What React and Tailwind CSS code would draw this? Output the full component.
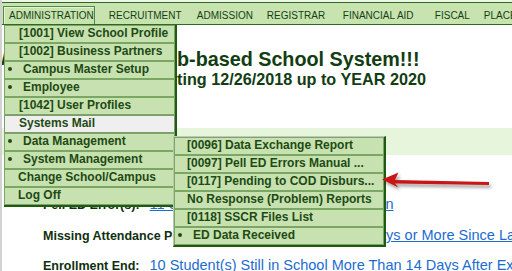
import React from 'react'

// --- Menu data -----------------------------------------------------------
const NAV = [
  { label: 'RECRUITMENT', w: 'w-[93px]', pl: 'pl-[14px]' },
  { label: 'ADMISSION', w: 'w-[68px]', pl: 'pl-[9px]' },
  { label: 'REGISTRAR', w: 'w-[75px]', pl: 'pl-[11px]' },
  { label: 'FINANCIAL AID', w: 'w-[97px]', pl: 'pl-[12px]' },
  { label: 'FISCAL', w: 'w-[49px]', pl: 'pl-[7px]' },
  { label: 'PLACEMENT', w: 'w-[60px]', pl: 'pl-[7px]' },
]

const MAIN_MENU = [
  { label: '[1001] View School Profile' },
  { label: '[1002] Business Partners' },
  { label: 'Campus Master Setup', bullet: true },
  { label: 'Employee', bullet: true },
  { label: '[1042] User Profiles' },
  { label: 'Systems Mail', active: true },
  { label: 'Data Management', bullet: true },
  { label: 'System Management', bullet: true },
  { label: 'Change School/Campus' },
  { label: 'Log Off' },
]

const SUB_MENU = [
  { label: '[0096] Data Exchange Report' },
  { label: '[0097] Pell ED Errors Manual ...' },
  { label: '[0117] Pending to COD Disburs...' },
  { label: 'No Response (Problem) Reports' },
  { label: '[0118] SSCR Files List' },
  { label: 'ED Data Received', bullet: true },
]

function MenuItem({ item, pad }) {
  const tone = item.active
    ? 'bg-[#efefef] border-[#7f9a72]'
    : 'bg-[#c7e2b0] border-[#7aa862]'
  return (
    <div className={`h-[18px] border ${tone} flex items-start leading-[14px] whitespace-nowrap overflow-hidden`}>
      {item.bullet ? (
        <>
          <span className="mt-[5px] ml-[3px] w-[4px] h-[4px] shrink-0 rounded-full bg-[#1e4a14]" />
          <span className="ml-[11px]">{item.label}</span>
        </>
      ) : (
        <span className={pad}>{item.label}</span>
      )}
    </div>
  )
}

function Row({ h, label, link }) {
  return (
    <div className={`${h} pl-[41px] flex items-baseline gap-[10px] whitespace-nowrap leading-[30px]`}>
      <span className="text-[12.5px] font-bold text-[#0f2f0f]">{label}</span>
      <a className="text-[14.5px] text-[#1c6cd0] underline">{link}</a>
    </div>
  )
}

// heading line whose first part sits under the dropdown menu
function Heading({ className, hidden, shown }) {
  return (
    <div className={`pl-[175px] whitespace-nowrap font-bold text-[#123d12] ${className}`}>
      <span className="relative">
        <span className="absolute right-full top-0">{hidden}</span>
        {shown}
      </span>
    </div>
  )
}

export default function App() {
  return (
    <div className="relative w-[512px] h-[271px] overflow-hidden bg-white border-l-2 border-[#d2d2d2] font-['Liberation_Sans',Arial,sans-serif]">
      <div className="h-[2px] bg-[#eef6e8]" />

      {/* top navigation */}
      <nav className="h-[23px] border-y border-[#2d6a1f] bg-[#c7e3b0] flex items-end pl-px text-[10px] leading-[10px] text-[#163f10] whitespace-nowrap">
        <div className="h-[18px] w-[97px] border-x border-t border-[#55874a] pt-[4px] pl-[5px] shadow-[inset_1px_1px_0_#e4f2da]">
          ADMINISTRATION
        </div>
        {NAV.map((n, i) => (
          <React.Fragment key={n.label}>
            {i > 0 && <span className="w-px h-[14px] mb-[1px] bg-[#2f5f22]" />}
            <div className={`h-[21px] pt-[8px] shrink-0 ${n.w} ${n.pl}`}>{n.label}</div>
          </React.Fragment>
        ))}
      </nav>

      {/* page content */}
      <Heading className="mt-[24px] text-[19.75px] leading-[20px]" hidden="Welcome to the We" shown="b-based School System!!!" />
      <Heading className="mt-[2px] text-[16.2px] leading-[16px]" hidden="License Star" shown="ting 12/26/2018 up to YEAR 2020" />

      <div className="mt-[41px] h-[27px] bg-[#e6f5dc]" />

      <div className="mt-[34px]">
        <Row h="h-[31px]" label="Pell ED Error(s):" link="11 Student(s) Pending ED Information" />
        <Row h="h-[30px]" label="Missing Attendance Posting:" link="3 Student(s) Absent 7 Days or More Since Last Posting" />
        <Row h="h-[30px]" label="Enrollment End:" link="10 Student(s) Still in School More Than 14 Days After Expected End" />
      </div>

      {/* dropdown menu */}
      <div className="absolute left-[2px] top-[25px] w-[173px] border-r-2 border-b-2 border-[#1f5a14] text-[12px] font-bold text-[#1e4a14]">
        {MAIN_MENU.map((m, i) => (
          <MenuItem key={m.label} item={m} pad={i >= 8 ? 'pl-[13px]' : 'pl-[14px]'} />
        ))}
      </div>

      {/* systems mail submenu */}
      <div className="absolute left-[171px] top-[136px] w-[213px] border-t border-l border-t-[#c4c4c4] border-l-[#b8c8b0] border-r-2 border-b-2 border-r-[#1f5a14] border-b-[#1f5a14] text-[12px] font-bold text-[#1e4a14]">
        {SUB_MENU.map((m) => (
          <MenuItem key={m.label} item={m} pad="pl-[12px]" />
        ))}
      </div>

      {/* red pointer arrow */}
      <svg className="absolute left-[-2px] top-0 pointer-events-none" width="512" height="271" viewBox="0 0 512 271">
        <defs>
          <filter id="arrowShadow" x="-10%" y="-50%" width="130%" height="250%">
            <feDropShadow dx="2" dy="3" stdDeviation="1.5" floodColor="#000" floodOpacity="0.35" />
          </filter>
        </defs>
        <path
          d="M382 179.5 L398.5 172.5 L395 180 L489 182 L489 185 L395 183.5 L398.5 187.5 Z"
          fill="#c81414"
          filter="url(#arrowShadow)"
        />
      </svg>
    </div>
  )
}
